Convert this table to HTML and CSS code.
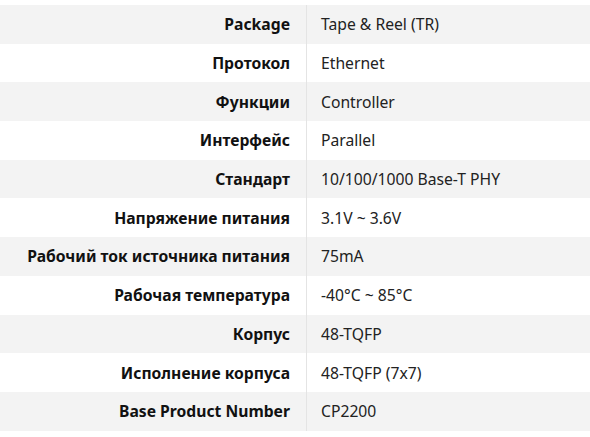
FILE: index.html
```html
<!DOCTYPE html>
<html lang="ru">
<head>
<meta charset="utf-8">
<link rel="stylesheet" href="styles.css">
</head>
<body>
<div class="specs">
  <div class="row"><div class="label">Package</div><div class="value">Tape &amp; Reel (TR)</div></div>
  <div class="row"><div class="label">Протокол</div><div class="value">Ethernet</div></div>
  <div class="row"><div class="label">Функции</div><div class="value">Controller</div></div>
  <div class="row"><div class="label">Интерфейс</div><div class="value">Parallel</div></div>
  <div class="row"><div class="label">Стандарт</div><div class="value">10/100/1000 Base-T PHY</div></div>
  <div class="row"><div class="label">Напряжение питания</div><div class="value">3.1V ~ 3.6V</div></div>
  <div class="row"><div class="label">Рабочий ток источника питания</div><div class="value">75mA</div></div>
  <div class="row"><div class="label">Рабочая температура</div><div class="value">-40°C ~ 85°C</div></div>
  <div class="row"><div class="label">Корпус</div><div class="value">48-TQFP</div></div>
  <div class="row"><div class="label">Исполнение корпуса</div><div class="value">48-TQFP (7x7)</div></div>
  <div class="row"><div class="label">Base Product Number</div><div class="value">CP2200</div></div>
</div>
</body>
</html>
```
FILE: styles.css
```css
html, body {
  margin: 0;
  padding: 0;
  background: #ffffff;
}
body {
  font-family: "Noto Sans", "Open Sans", sans-serif;
  font-size: 15.7px;
  color: #1a1a1a;
  padding-top: 5px;
}
.specs {
  display: flex;
  flex-direction: column;
}
.row {
  display: grid;
  grid-template-columns: 307px 1fr;
  height: 38.7px;
  align-items: stretch;
}
.row:nth-child(odd) {
  background: #f3f3f3;
}
.label {
  display: flex;
  align-items: center;
  justify-content: flex-end;
  padding-right: 16px;
  font-weight: 700;
  color: #111;
  border-right: 1px solid #e4e4e4;
}
.value {
  display: flex;
  align-items: center;
  padding-left: 14px;
  color: #222;
}
```
